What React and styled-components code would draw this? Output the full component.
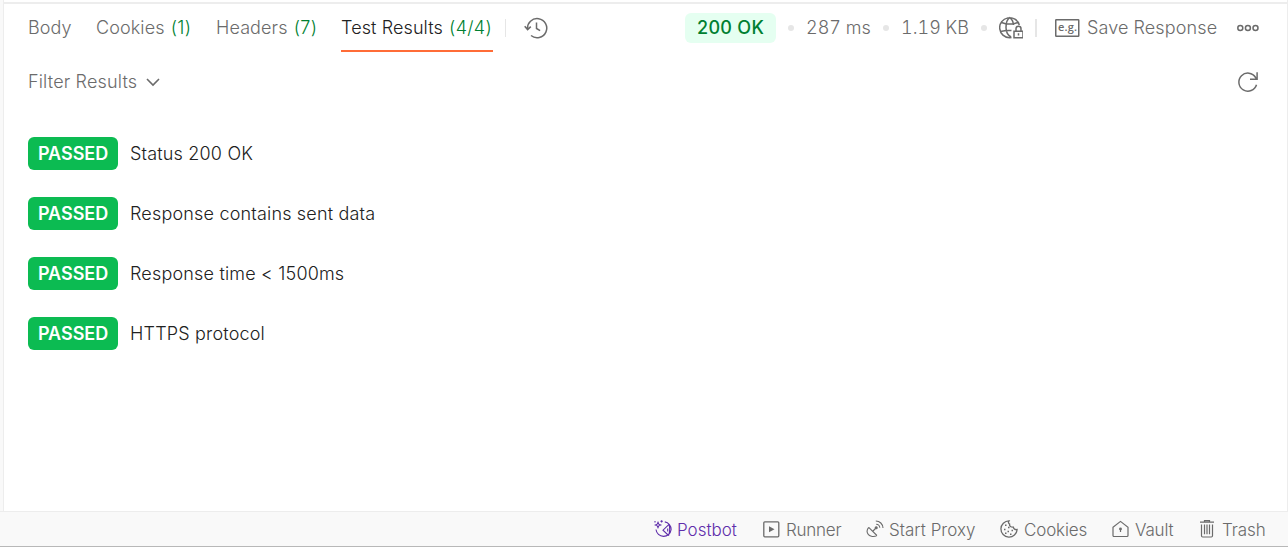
import React from "react";
import styled, { createGlobalStyle } from "styled-components";

const GlobalStyle = createGlobalStyle`
  * { box-sizing: border-box; }
  body { margin: 0; background: #fff; }
`;

const Page = styled.div`
  width: 1288px;
  height: 547px;
  display: flex;
  flex-direction: column;
  overflow: hidden;
  background: #f9f9f9;
  font-family: Inter, "Liberation Sans", sans-serif;
  font-size: 18px;
  font-weight: 365;
  line-height: 24px;
  color: #6b6b6b;
`;

const Pane = styled.main`
  flex: 1;
  margin-left: 3px;
  border-left: 1px solid #ededed;
  border-right: 1px solid #ededed;
  background: #fff;
`;

const Header = styled.header`
  height: 52px;
  margin-top: 2px;
  border-top: 2px solid #ededed;
  padding: 0 28px 0 24px;
  display: flex;
  justify-content: space-between;
  align-items: flex-start;
`;

const Tabs = styled.nav`
  display: flex;
  align-items: flex-start;
  gap: 24px;
`;

const Tab = styled.div`
  width: ${(p) => p.$width}px;
  height: 48px;
  padding-top: 12px;
  white-space: nowrap;
  letter-spacing: 0.1px;
  color: ${(p) => (p.$active ? "#212121" : "#6b6b6b")};
  border-bottom: 2px solid ${(p) => (p.$active ? "#ff6c37" : "transparent")};
`;

const Count = styled.span`
  margin-left: 1px;
  letter-spacing: 0.3px;
  color: #007f31;
`;

const Divider = styled.div`
  width: ${(p) => p.$width}px;
  height: 18px;
  margin: 15px ${(p) => p.$right}px 0 ${(p) => p.$left}px;
  background: #e6e6e6;
`;

const History = styled.div`
  display: flex;
  align-items: flex-start;
  margin-left: -12px;
  svg { margin-top: 12px; }
`;

const Meta = styled.div`
  display: flex;
  align-items: flex-start;
`;

const StatusBadge = styled.div`
  width: 91px;
  height: 30px;
  margin-top: 9px;
  padding-left: 12px;
  border-radius: 6px;
  line-height: 30px;
  font-weight: 480;
  letter-spacing: 0.3px;
  white-space: nowrap;
  color: #007f31;
  background: #e5fff1;
`;

const Dot = styled.div`
  width: 6px;
  height: 6px;
  margin: 21px ${(p) => p.$right}px 0 12px;
  border-radius: 50%;
  background: #e6e6e6;
`;

const Label = styled.div`
  width: ${(p) => (p.$width ? `${p.$width}px` : "auto")};
  white-space: nowrap;
  letter-spacing: ${(p) => p.$spacing ?? 0.12}px;
`;

const MetaLabel = styled(Label)`
  margin-top: 12px;
  font-variant-numeric: tabular-nums;
`;

const MetaIcon = styled.div`
  height: 24px;
  margin: 12px ${(p) => p.$right || 0}px 0 ${(p) => p.$left || 0}px;
  svg { display: block; }
`;

const FilterBar = styled.div`
  height: 56px;
  padding: 0 28px 0 24px;
  display: flex;
  align-items: center;
  justify-content: space-between;
  svg { display: block; }
`;

const Filter = styled.div`
  display: flex;
  align-items: center;
  gap: 8px;
`;

const Results = styled.ul`
  list-style: none;
  margin: 0;
  padding: 27px 24px;
  display: flex;
  flex-direction: column;
  gap: 27px;
`;

const Result = styled.li`
  height: 33px;
  display: flex;
  align-items: center;
  gap: 12px;
  color: #212121;
`;

const Passed = styled.span`
  width: 90px;
  height: 33px;
  padding-left: 10px;
  border-radius: 6px;
  line-height: 33px;
  font-weight: 590;
  letter-spacing: -0.05px;
  color: #fff;
  background: #0cbb52;
`;

const Footer = styled.footer`
  height: 36px;
  padding: 0 22px 0 0;
  border-top: 1px solid #ededed;
  border-bottom: 1px solid #b8b8b8;
  display: flex;
  justify-content: flex-end;
  align-items: center;
  gap: 25px;
  font-size: 17px;
`;

const FooterItem = styled.div`
  display: flex;
  align-items: center;
  gap: ${(p) => p.$gap}px;
  color: ${(p) => p.$color || "#6b6b6b"};
  svg { display: block; }
`;

const FooterLabel = styled(Label)`
  padding-top: 2px;
`;

const Svg = ({ w = 24, h = 24, sw = 1.5, children }) => (
  <svg width={w} height={h} viewBox={`0 0 ${w} ${h}`} fill="none" stroke="currentColor" strokeWidth={sw}>
    {children}
  </svg>
);

const HistoryIcon = () => (
  <Svg>
    <path d="M3.600 13.200A9.600 9.600 0 1 1 7 19.500M.7 10.300l2.900 3.300 3.200-3M12.500 6.500v6l3.600 2.200" />
  </Svg>
);

const GlobeIcon = () => (
  <Svg>
    <path d="M12.500 21.600c-.6.1-1 .1-1.800.1A10 10 0 1 1 20.300 9M12 21c-3.500-2-5-5.500-5-9.500S8 3.500 10.700 1.700C13.200 3.500 14.300 6 14.500 9M2.500 6.500c5 1.900 11.500 1.900 16.400 0M1.500 15.500c4-1 7-1.200 11-.9" />
    <path d="M15 15.200h9v6.600h-9zM17 15v-2.200a2.500 2.500 0 0 1 5 0V15M19.500 17.200v2.300" />
  </Svg>
);

const ExampleText = styled.text`
  font: 650 11px "Open Sans", sans-serif;
  fill: #6b6b6b;
  stroke: none;
`;

const ExampleIcon = () => (
  <Svg w={25}>
    <rect x="0.750" y="3.750" width="23" height="16.500" rx="0.500" />
    <ExampleText x="3" y="14.500" textLength="19">e.g.</ExampleText>
  </Svg>
);

const MoreIcon = () => (
  <Svg w={22}>
    <circle cx="3.300" cy="12" r="2.500" />
    <circle cx="10.900" cy="12" r="2.500" />
    <circle cx="18.500" cy="12" r="2.500" />
  </Svg>
);

const ChevronIcon = () => (
  <Svg w={14} h={10} sw={1.6}>
    <path d="M1 2l6 6 6-6" />
  </Svg>
);

const RefreshIcon = () => (
  <Svg w={22}>
    <path d="M19.500 14.700A9 9 0 1 1 18.600 7.500L19.800 9M20.100 2.300V9.200H13" />
  </Svg>
);

const PostbotIcon = () => (
  <Svg w={18} h={18} sw={1.1}>
    <path d="M2 9.500a7.600 7.600 0 0 0 15.100.2A7.600 7.600 0 0 0 10.800 1.900M15 4.300L9 10.200l5.600 5.300M15 4.300c1 3.600.9 7.500-.4 11.200M13.700 8.600v3M4 2.300l.8 1.900 1.900.8-1.900.8L4 7.700l-.8-1.900L1.300 5l1.900-.8zM7.600.3v2.200M6.500 1.400h2.200M1 1v1.500" />
  </Svg>
);

const RunnerIcon = () => (
  <Svg w={17} h={17} sw={1.3}>
    <rect x=".8" y=".8" width="15" height="15" rx="1" />
    <path d="M6 5.300v6l5.500-3z" fill="currentColor" stroke="none" />
  </Svg>
);

const ProxyIcon = () => (
  <Svg w={18} h={18} sw={1.1}>
    <path d="M2.700 7.300l8.200 8.200M2.700 7.300c-2 2.500-2 5.300-.3 7.300s5.600 2.600 8.500.9M7 11l3-3M10.200 4.200c2 .1 3.500 1.600 3.600 3.600M9.800 1c4 0 7 3 7.200 7" />
    <circle cx="10.200" cy="7.800" r="1" fill="currentColor" />
  </Svg>
);

const CookieIcon = () => (
  <Svg w={18} h={18} sw={1.3}>
    <path d="M9 .9a8.100 8.100 0 1 0 8.100 8.600c-2 .4-3.500-.5-3.700-2.400-2.500.2-4.200-1-3.800-3C8.200 3.300 8.200 2 9 .9z" />
    <path d="M5 5.200h1.500M8 7.600h1.500M4 9.500h1.500M11.500 10.500H13M7.500 11.500H9M5 13.300h1.500M10 14.200h1.500" strokeWidth="1.500" />
  </Svg>
);

const VaultIcon = () => (
  <Svg w={17} h={18} sw={1.2}>
    <path d="M1 7.200l7.500-5.800L16 7.200v8.300a1 1 0 0 1-1 1H2a1 1 0 0 1-1-1zM8.500 9.500V12" />
    <circle cx="8.500" cy="8.900" r=".8" fill="currentColor" />
  </Svg>
);

const TrashIcon = () => (
  <Svg w={14} h={18} sw={1.2}>
    <path d="M0 2.200h14M4.500 2V.7h5V2M1.500 4.500v11.300a1.200 1.200 0 0 0 1.200 1.200h8.600a1.200 1.200 0 0 0 1.200-1.200V4.500M4.500 4.500v9.700M7 4.500v9.700M9.500 4.500v9.700" />
  </Svg>
);

const results = [
  "Status 200 OK",
  "Response contains sent data",
  "Response time < 1500ms",
  "HTTPS protocol",
];

const tools = [
  { name: "Postbot", Icon: PostbotIcon, width: 61, gap: 5, spacing: 0, color: "#5f2eab" },
  { name: "Runner", Icon: RunnerIcon, width: 55, gap: 6, spacing: -0.25 },
  { name: "Start Proxy", Icon: ProxyIcon, width: 86, gap: 5, spacing: 0.03 },
  { name: "Cookies", Icon: CookieIcon, width: 63, gap: 6, spacing: -0.15 },
  { name: "Vault", Icon: VaultIcon, width: 40, gap: 6, spacing: -0.15 },
  { name: "Trash", Icon: TrashIcon, width: 44, gap: 8, spacing: -0.1 },
];

export default function App() {
  return (
    <>
      <GlobalStyle />
      <Page>
        <Pane>
          <Header>
            <Tabs>
              <Tab $width={44}>Body</Tab>
              <Tab $width={96}>Cookies <Count>(1)</Count></Tab>
              <Tab $width={101}>Headers <Count>(7)</Count></Tab>
              <Tab $width={152} $active>Test Results <Count>(4/4)</Count></Tab>
              <History>
                <Divider $width={1} $left={0} $right={18} />
                <HistoryIcon />
              </History>
            </Tabs>
            <Meta>
              <StatusBadge>200 OK</StatusBadge>
              <Dot $right={12} />
              <MetaLabel $width={65} $spacing={0}>287 ms</MetaLabel>
              <Dot $right={12} />
              <MetaLabel $width={68} $spacing={0}>1.19 KB</MetaLabel>
              <Dot $right={12} />
              <MetaIcon><GlobeIcon /></MetaIcon>
              <Divider $width={2} $left={12} $right={18} />
              <MetaIcon $right={7}><ExampleIcon /></MetaIcon>
              <MetaLabel $width={131}>Save Response</MetaLabel>
              <MetaIcon $left={19}><MoreIcon /></MetaIcon>
            </Meta>
          </Header>
          <FilterBar>
            <Filter>
              <Label $width={110} $spacing={0.16}>Filter Results</Label>
              <ChevronIcon />
            </Filter>
            <RefreshIcon />
          </FilterBar>
          <Results>
            {results.map((text) => (
              <Result key={text}>
                <Passed>PASSED</Passed>
                <Label $spacing={0.18}>{text}</Label>
              </Result>
            ))}
          </Results>
        </Pane>
        <Footer>
          {tools.map(({ name, Icon, width, gap, spacing, color }) => (
            <FooterItem key={name} $gap={gap} $color={color}>
              <Icon />
              <FooterLabel $width={width} $spacing={spacing}>{name}</FooterLabel>
            </FooterItem>
          ))}
        </Footer>
      </Page>
    </>
  );
}
